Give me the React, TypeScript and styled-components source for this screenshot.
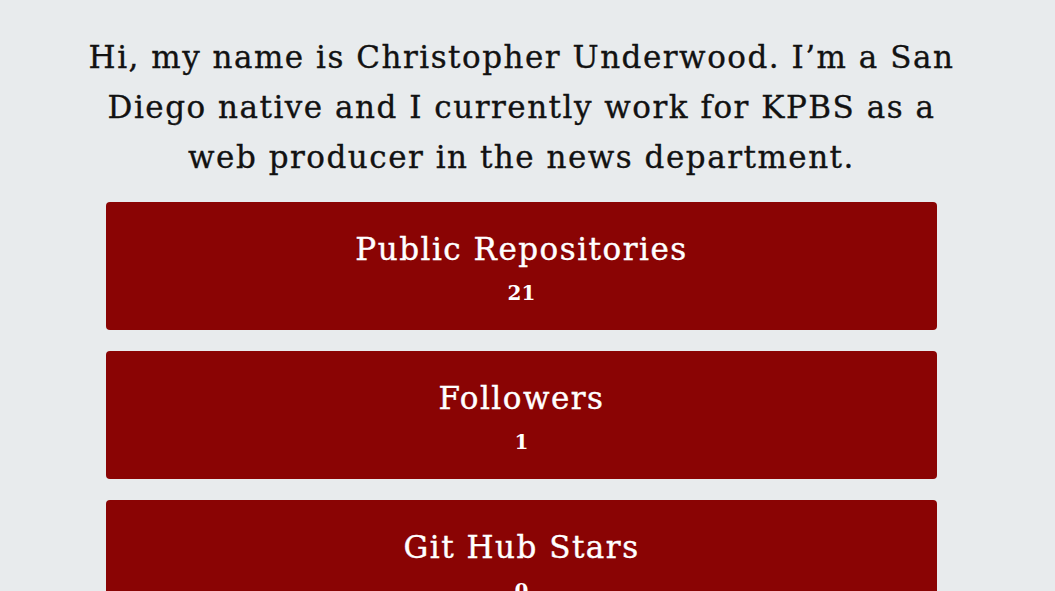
import React from "react";
import styled, { createGlobalStyle } from "styled-components";

const Global = createGlobalStyle`
  html, body {
    margin: 0;
    padding: 0;
    background: #e8ebed;
  }
  body {
    font-family: "DejaVu Serif", "Liberation Serif", serif;
    color: #111;
  }
`;

const Page = styled.main`
  display: flex;
  flex-direction: column;
  align-items: center;
  padding: 32px 0 40px;
  width: 1043px;
`;

const Intro = styled.p`
  margin: 0 0 20px;
  width: 876px;
  text-align: center;
  font-size: 31px;
  line-height: 50px;
  letter-spacing: 1.5px;
  color: #121212;
  -webkit-text-stroke: 0.35px #121212;
`;

const Cards = styled.section`
  width: 831px;
  display: flex;
  flex-direction: column;
  gap: 21px;
`;

const Card = styled.div`
  background: #8a0404;
  border-radius: 4px;
  height: 128px;
  box-sizing: border-box;
  padding-top: 27px;
  display: flex;
  flex-direction: column;
  align-items: center;
  color: #fff;
`;

const Title = styled.h2`
  margin: 0;
  font-size: 31px;
  line-height: 40px;
  font-weight: 400;
  letter-spacing: 1.5px;
  -webkit-text-stroke: 0.4px #fff;
`;

const Count = styled.div`
  margin-top: 12px;
  font-size: 20px;
  font-weight: 700;
  line-height: 24px;
`;

const stats = [
  { label: "Public Repositories", value: 21 },
  { label: "Followers", value: 1 },
  { label: "Git Hub Stars", value: 0 },
];

export default function App() {
  return (
    <>
      <Global />
      <Page>
        <Intro>
          Hi, my name is Christopher Underwood. I’m a San Diego native and I
          currently work for KPBS as a web producer in the news department.
        </Intro>
        <Cards>
          {stats.map((s) => (
            <Card key={s.label}>
              <Title>{s.label}</Title>
              <Count>{s.value}</Count>
            </Card>
          ))}
        </Cards>
      </Page>
    </>
  );
}
